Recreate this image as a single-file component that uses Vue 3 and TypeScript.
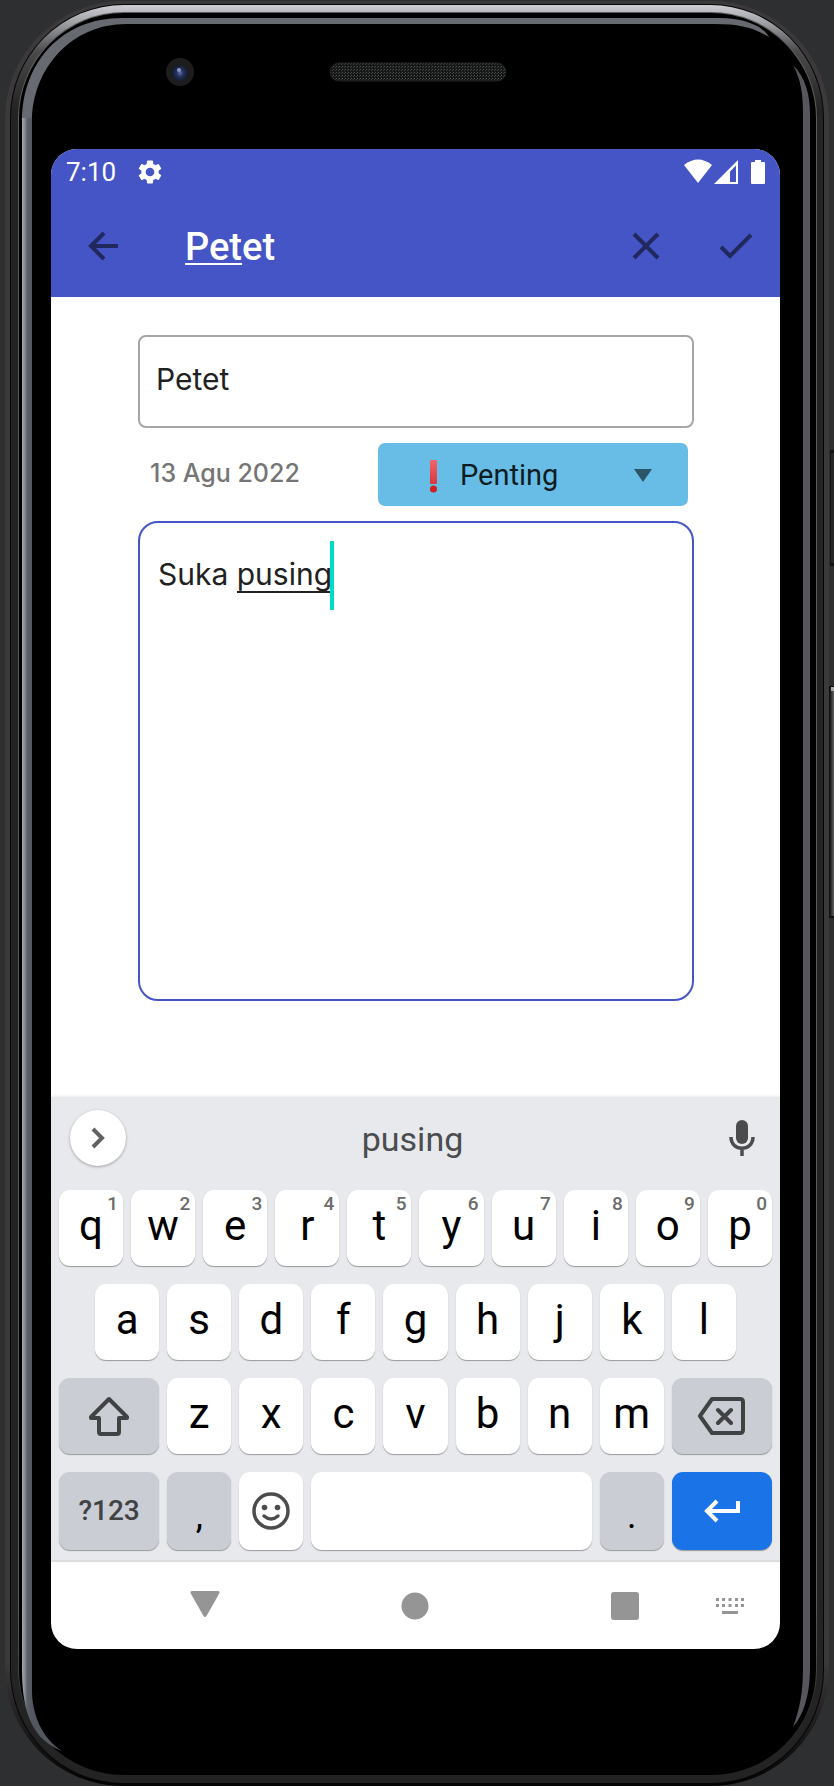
<script setup lang="ts">
import { ref } from 'vue'

interface Key {
  id: string
  label?: string
  hint?: string
  kind?: 'wide' | 'space' | 'indent'
  tone?: 'grey' | 'blue'
  icon?: 'shift' | 'backspace' | 'emoji' | 'enter'
  low?: boolean
}

const title = ref('Petet')
const note = ref('Suka pusing')
const priority = ref('Penting')

const letters = (row: string): Key[] => row.split('').map((c) => ({ id: c, label: c }))

const keys: Key[] = [
  ...letters('qwertyuiop').map((k, i) => ({ ...k, hint: String((i + 1) % 10) })),
  ...letters('asdfghjkl').map((k, i): Key => (i === 0 ? { ...k, kind: 'indent' } : k)),
  { id: 'Shift', icon: 'shift', kind: 'wide', tone: 'grey' },
  ...letters('zxcvbnm'),
  { id: 'Backspace', icon: 'backspace', kind: 'wide', tone: 'grey' },
  { id: 'Symbols', label: '?123', kind: 'wide', tone: 'grey' },
  { id: 'Comma', label: ',', tone: 'grey', low: true },
  { id: 'Emoji', icon: 'emoji' },
  { id: 'Space', kind: 'space' },
  { id: 'Period', label: '.', tone: 'grey', low: true },
  { id: 'Enter', icon: 'enter', kind: 'wide', tone: 'blue' },
]
</script>

<template>
  <div class="device">
    <svg class="frame" viewBox="0 0 834 1786" preserveAspectRatio="none" aria-hidden="true">
      <defs>
        <linearGradient id="shine" gradientUnits="userSpaceOnUse" x1="0" y1="4" x2="0" y2="110">
          <stop offset="0" stop-color="#d0d0d6" />
          <stop offset="0.16" stop-color="#a4a6aa" />
          <stop offset="0.45" stop-color="#4a4a4c" />
          <stop offset="1" stop-color="#232323" />
        </linearGradient>
        <linearGradient id="edge" gradientUnits="userSpaceOnUse" x1="0" y1="1660" x2="0" y2="1780">
          <stop offset="0" stop-color="#3c393a" />
          <stop offset="1" stop-color="#050505" />
        </linearGradient>
        <linearGradient id="line" gradientUnits="userSpaceOnUse" x1="0" y1="1600" x2="0" y2="1770">
          <stop offset="0" stop-color="#5c5c5c" />
          <stop offset="1" stop-color="#1c1c1c" />
        </linearGradient>
        <linearGradient id="rim" gradientUnits="userSpaceOnUse" x1="22" y1="0" x2="32" y2="0">
          <stop offset="0" stop-color="#a4a7ab" />
          <stop offset="0.35" stop-color="#7c8088" />
          <stop offset="0.5" stop-color="#5c626c" />
          <stop offset="1" stop-color="#53575f" />
        </linearGradient>
        <linearGradient id="button" x1="0" y1="0" x2="1" y2="0">
          <stop offset="0" stop-color="#151515" />
          <stop offset="1" stop-color="#8c8c8c" />
        </linearGradient>
        <radialGradient id="lens">
          <stop offset="0" stop-color="#6274b4" />
          <stop offset="0.4" stop-color="#27345f" />
          <stop offset="1" stop-color="#141a30" />
        </radialGradient>
        <pattern id="mesh" width="3" height="3" patternUnits="userSpaceOnUse">
          <rect width="3" height="3" fill="#161717" />
          <rect width="1" height="1" fill="#4d5150" />
          <rect x="2" y="1" width="1" height="1" fill="#3a3d3c" />
        </pattern>
      </defs>
      <rect x="830" y="450" width="10" height="116" fill="#111" />
      <rect x="831" y="453" width="8" height="110" fill="#262626" />
      <rect x="829" y="686" width="10" height="232" fill="#111" />
      <rect x="830" y="687" width="6" height="229" fill="url(#button)" />
      <rect x="831" y="687" width="6" height="4" fill="#aaa" />
      <rect x="5" y="1" width="824" height="1785" rx="118" fill="url(#edge)" />
      <rect x="10" y="4" width="814" height="1780" rx="114" fill="#050505" />
      <rect x="11" y="5" width="812" height="1778" rx="113" fill="url(#shine)" />
      <rect x="18" y="12" width="799" height="1763" rx="106" fill="url(#line)" />
      <rect x="19" y="13" width="797" height="1762" rx="105" fill="#000" />
      <path d="M122 18H720C744 18 763 26 769 37C754 28 740 24 715 24H126C72 24 32 68 32 122H22C22 62 62 18 122 18Z" fill="#686a71" />
      <path d="M22 118H32V1690C32 1715 42 1738 62 1751C34 1740 22 1715 22 1670Z" fill="url(#rim)" />
      <path d="M793 65C806 78 810 96 810 114V1668C810 1696 803 1716 793 1727C800 1708 803 1692 803 1668V114C803 94 801 80 793 65Z" fill="#56575c" />
      <circle cx="180" cy="72" r="14" fill="#1d1d1e" />
      <circle cx="180" cy="73" r="8" fill="url(#lens)" />
      <circle cx="179" cy="70" r="2" fill="#8794c8" />
      <rect x="330" y="63" width="176" height="18" rx="9" fill="url(#mesh)" stroke="#222" />
    </svg>

    <main class="screen">
      <header class="top">
        <div class="status">
          <span class="clock">7:10</span>
          <svg class="gear" viewBox="2 2 20 20" width="24" height="24" aria-hidden="true">
            <path
              fill="#fff"
              d="M19.14 12.94c.04-.3.06-.61.06-.94 0-.32-.02-.64-.07-.94l2.03-1.58a.49.49 0 0 0 .12-.61l-1.92-3.32a.49.49 0 0 0-.59-.22l-2.39.96a7 7 0 0 0-1.62-.94l-.36-2.54a.48.48 0 0 0-.48-.41h-3.84a.47.47 0 0 0-.47.41l-.36 2.54c-.59.24-1.13.57-1.62.94l-2.39-.96a.48.48 0 0 0-.59.22L2.74 8.87a.47.47 0 0 0 .12.61l2.03 1.58c-.05.3-.09.63-.09.94s.02.64.07.94l-2.03 1.58a.49.49 0 0 0-.12.61l1.92 3.32c.12.22.37.29.59.22l2.39-.96c.5.38 1.03.7 1.62.94l.36 2.54c.05.24.24.41.48.41h3.84c.24 0 .44-.17.47-.41l.36-2.54a6.8 6.8 0 0 0 1.62-.94l2.39.96c.22.08.47 0 .59-.22l1.92-3.32a.47.47 0 0 0-.12-.61zM12 15.6A3.6 3.6 0 1 1 12 8.4a3.6 3.6 0 0 1 0 7.2z"
            />
          </svg>
          <svg class="signals" viewBox="0 0 82 26" width="82" height="26" aria-hidden="true">
            <path fill="#fff" d="M0 6Q14-5 28 6L14 24Z" />
            <path fill="#fff" fill-rule="evenodd" d="M30 25L54 1V25ZM46 12.500V23H52V6.500Z" />
            <path fill="#fff" d="M71 1H77V3H80Q81 3 81 4V24Q81 25 80 25H68Q67 25 67 24V4Q67 3 68 3H71Z" />
          </svg>
        </div>
        <div class="appbar">
          <button class="tool" type="button" aria-label="Kembali">
            <svg viewBox="0 0 32 32" width="32" height="32"><path d="M31 16H3M17 3L4 16L17 29" /></svg>
          </button>
          <h1><u>Pet</u>et</h1>
          <button class="tool" type="button" aria-label="Batal">
            <svg viewBox="0 0 32 32" width="32" height="32"><path d="M4 4L28 28M28 4L4 28" /></svg>
          </button>
          <button class="tool" type="button" aria-label="Simpan">
            <svg viewBox="0 0 32 32" width="32" height="32"><path d="M1 17L10 26L31 5" /></svg>
          </button>
        </div>
      </header>

      <form class="form" @submit.prevent>
        <input v-model="title" class="title" type="text" aria-label="Judul" />
        <div class="meta">
          <time datetime="2022-08-13">13 Agu 2022</time>
          <div class="priority">
            <select v-model="priority" aria-label="Prioritas">
              <option>Penting</option>
            </select>
            <svg class="mark" viewBox="0 0 8 34" width="8" height="34" aria-hidden="true">
              <defs>
                <linearGradient id="mark" x1="0" y1="0" x2="0" y2="1">
                  <stop offset="0" stop-color="#f0646c" />
                  <stop offset="1" stop-color="#d8383f" />
                </linearGradient>
              </defs>
              <rect x="0" y="1" width="7" height="24" rx="1" fill="url(#mark)" />
              <circle cx="3.500" cy="30" r="3.500" fill="#cd2027" />
            </svg>
            <svg class="arrow" viewBox="0 0 18 13" width="18" height="13" aria-hidden="true">
              <path d="M0 0H18L9 13Z" fill="#2d5568" />
            </svg>
          </div>
        </div>
        <div class="note">
          <textarea v-model="note" aria-label="Catatan" spellcheck="false"></textarea>
          <span class="composing"></span>
          <span class="caret"></span>
        </div>
      </form>

      <section class="keyboard" aria-label="Papan ketik">
        <div class="suggest">
          <button class="more" type="button" aria-label="Lainnya">
            <svg viewBox="0 0 14 22" width="14" height="22"><path d="M2 2L11 11L2 20" fill="none" stroke="#626262" stroke-width="4" /></svg>
          </button>
          <button class="word" type="button">pusing</button>
          <button class="mic" type="button" aria-label="Suara">
            <svg viewBox="0 0 26 36" width="26" height="36">
              <rect x="7" y="0" width="12" height="24" rx="6" fill="#4b4c4e" />
              <path d="M2 17C2 32 24 32 24 17M13 28V36" fill="none" stroke="#4b4c4e" stroke-width="3.500" />
            </svg>
          </button>
        </div>
        <div class="keys">
          <button
            v-for="k in keys"
            :key="k.id"
            type="button"
            class="key"
            :class="[k.kind, k.tone, { low: k.low, symbols: k.id === 'Symbols' }]"
            :aria-label="k.id"
          >
            <span v-if="k.hint" class="hint">{{ k.hint }}</span>
            <span v-if="k.label">{{ k.label }}</span>
            <svg v-if="k.icon === 'shift'" viewBox="0 0 42 40" width="42" height="40">
              <path d="M21 3L39 21V22H31V36Q31 38 29 38H13Q11 38 11 36V22H3V21Z" fill="none" stroke="#414244" stroke-width="4" stroke-linejoin="round" />
            </svg>
            <svg v-else-if="k.icon === 'backspace'" viewBox="0 0 48 38" width="48" height="38">
              <path d="M14 2H42Q45 2 45 5V33Q45 36 42 36H14L2 19ZM20 13L33 26M33 13L20 26" fill="none" stroke="#414244" stroke-width="4" stroke-linejoin="round" stroke-linecap="round" />
            </svg>
            <svg v-else-if="k.icon === 'emoji'" viewBox="0 0 38 38" width="38" height="38">
              <circle cx="19" cy="19" r="17" fill="none" stroke="#4b4c4e" stroke-width="3.500" />
              <circle cx="12.500" cy="15.500" r="2.800" fill="#4b4c4e" />
              <circle cx="25.500" cy="15.500" r="2.800" fill="#4b4c4e" />
              <path d="M12 24Q19 30 26 24" fill="none" stroke="#4b4c4e" stroke-width="3.500" stroke-linecap="round" />
            </svg>
            <svg v-else-if="k.icon === 'enter'" viewBox="0 0 36 24" width="36" height="24">
              <path d="M34 2V12H3M13 2L3 12L13 22" fill="none" stroke="#fff" stroke-width="4" />
            </svg>
          </button>
        </div>
      </section>

      <nav class="nav">
        <button type="button" aria-label="Tutup papan ketik">
          <svg viewBox="0 0 30 30" width="30" height="30"><path d="M2 0H28Q30 0 29.500 2L16.500 25Q15 27 13.500 25L.5 2Q0 0 2 0Z" /></svg>
        </button>
        <button type="button" aria-label="Beranda">
          <svg viewBox="0 0 28 28" width="28" height="28"><circle cx="14" cy="14" r="13.500" /></svg>
        </button>
        <button type="button" aria-label="Aplikasi terbaru">
          <svg viewBox="0 0 28 28" width="28" height="28"><rect width="28" height="28" rx="3" /></svg>
        </button>
        <button type="button" class="switch" aria-label="Ganti papan ketik">
          <svg viewBox="0 0 28 16" width="28" height="16">
            <path d="M0 0h3v3h-3zM6 0h3v3h-3zM12.500 0h3v3h-3zM19 0h3v3h-3zM25 0h3v3h-3zM0 6h3v3h-3zM6 6h3v3h-3zM12.500 6h3v3h-3zM19 6h3v3h-3zM25 6h3v3h-3zM6 13h16v3h-16z" />
          </svg>
        </button>
      </nav>
    </main>
  </div>
</template>

<style>
body {
  margin: 0;
  background: #2d2f31;
}
</style>

<style scoped>
* {
  box-sizing: border-box;
}
button {
  border: 0;
  padding: 0;
  margin: 0;
  background: none;
  font: inherit;
  color: inherit;
  display: flex;
  align-items: center;
  justify-content: center;
}
svg {
  display: block;
}
.device {
  position: relative;
  padding: 149px 54px 137px 51px;
  font-family: Roboto, "Liberation Sans", sans-serif;
}
.frame {
  position: absolute;
  inset: 0;
  width: 100%;
  height: 100%;
}
.screen {
  position: relative;
  overflow: hidden;
  border-radius: 26px;
  background: #fff;
}
.top {
  background: #4555c5;
  color: #fff;
}
.status {
  display: flex;
  align-items: center;
  height: 46px;
  padding: 0 14px 0 15px;
}
.clock {
  font-size: 26px;
  line-height: 46px;
}
.gear {
  margin-left: 22px;
}
.signals {
  margin-left: auto;
}
.appbar {
  display: flex;
  align-items: center;
  height: 102px;
  padding: 0 16px 0 24px;
}
.tool {
  width: 56px;
  height: 56px;
}
.tool + .tool {
  margin-left: 34px;
}
.tool path {
  fill: none;
  stroke: #20285e;
  stroke-width: 4px;
}
h1 {
  flex: 1;
  margin: 0 0 0 54px;
  padding-top: 2px;
  font-size: 38px;
  line-height: 48px;
  font-weight: 500;
}
h1 u {
  text-decoration-thickness: 2px;
  text-underline-offset: 3px;
  text-decoration-skip-ink: none;
}
.form {
  padding: 38px 86px 96px 87px;
}
.title,
textarea {
  display: block;
  width: 100%;
  margin: 0;
  outline: 0;
  background: #fff;
  color: #212121;
  font-family: Inter, "Liberation Sans", sans-serif;
  font-size: 30px;
  line-height: 40px;
}
.title {
  height: 93px;
  padding: 0 16px 6px;
  border: 2px solid #a6a6a6;
  border-radius: 8px;
}
.meta {
  display: flex;
  align-items: center;
  justify-content: space-between;
  padding: 15px 6px 15px 12px;
}
time {
  padding-bottom: 4px;
  font-family: Inter, "Liberation Sans", sans-serif;
  font-size: 25px;
  line-height: 32px;
  font-weight: 500;
  color: #757575;
}
.priority {
  position: relative;
  width: 310px;
}
select {
  appearance: none;
  display: block;
  width: 100%;
  height: 63px;
  padding: 0 60px 0 82px;
  border: 0;
  border-radius: 7px;
  background: #67bde6;
  color: #0e1c23;
  font-family: Roboto, "Liberation Sans", sans-serif;
  font-size: 29px;
}
.mark {
  position: absolute;
  left: 52px;
  top: 16px;
  pointer-events: none;
}
.arrow {
  position: absolute;
  right: 36px;
  top: 26px;
  pointer-events: none;
}
.note {
  position: relative;
}
textarea {
  height: 480px;
  padding: 31px 18px;
  border: 2px solid #4555c5;
  border-radius: 20px;
  resize: none;
}
.composing {
  position: absolute;
  left: 99px;
  top: 70px;
  width: 94px;
  height: 2px;
  background: #212121;
}
.caret {
  position: absolute;
  left: 192px;
  top: 20px;
  width: 4px;
  height: 69px;
  background: #03dac5;
}
.keyboard {
  padding: 0 8px 10px;
  background: #e8e9ed;
  border-bottom: 2px solid #dcdddf;
  box-shadow: 0 -1px 3px #00000014;
}
.suggest {
  display: grid;
  grid-template-columns: 1fr auto 1fr;
  align-items: center;
  height: 82px;
  margin-bottom: 11px;
  padding: 0 17px 0 11px;
}
.more {
  width: 56px;
  height: 56px;
  border-radius: 50%;
  background: #fff;
  box-shadow: 0 1px 3px #00000050;
}
.word {
  height: 56px;
  padding-top: 2px;
  font-size: 34px;
  color: #4b4c4e;
}
.mic {
  justify-self: end;
  width: 26px;
  height: 56px;
}
.keys {
  display: grid;
  grid-template-columns: repeat(20, 1fr);
  grid-template-rows: 76px 76px 76px 78px;
  gap: 18px 8px;
}
.key {
  position: relative;
  grid-column: span 2;
  min-width: 0;
  padding-bottom: 4px;
  border-radius: 11px;
  background: #fff;
  box-shadow: 0 1px 1px #00000058;
  color: #000;
  font-size: 42px;
  line-height: 48px;
}
.key svg {
  margin-top: 3px;
}
.hint {
  position: absolute;
  top: 4px;
  right: 5px;
  font-size: 19px;
  line-height: 20px;
  font-weight: 500;
  color: #6c6c6c;
}
.indent {
  grid-column: 2 / span 2;
}
.wide {
  grid-column: span 3;
}
.space {
  grid-column: span 8;
}
.grey {
  background: #cbcdd5;
}
.blue {
  background: #1b73e8;
}
.low {
  padding-top: 14px;
  font-size: 36px;
}
.symbols {
  padding: 0;
  font-size: 28px;
  font-weight: 500;
  color: #414244;
}
.nav {
  display: grid;
  grid-template-columns: 49fr 210fr 210fr 210fr 50fr;
  align-items: center;
  height: 87px;
}
.nav button {
  grid-row: 1;
  justify-self: center;
  width: 60px;
  height: 60px;
}
.nav button:nth-child(1) {
  grid-column: 2;
}
.nav button:nth-child(2) {
  grid-column: 3;
}
.nav button:nth-child(3) {
  grid-column: 4;
}
.nav .switch {
  grid-column: 4 / span 2;
  justify-self: end;
  margin-right: 20px;
}
.nav svg {
  fill: #959595;
}
</style>
